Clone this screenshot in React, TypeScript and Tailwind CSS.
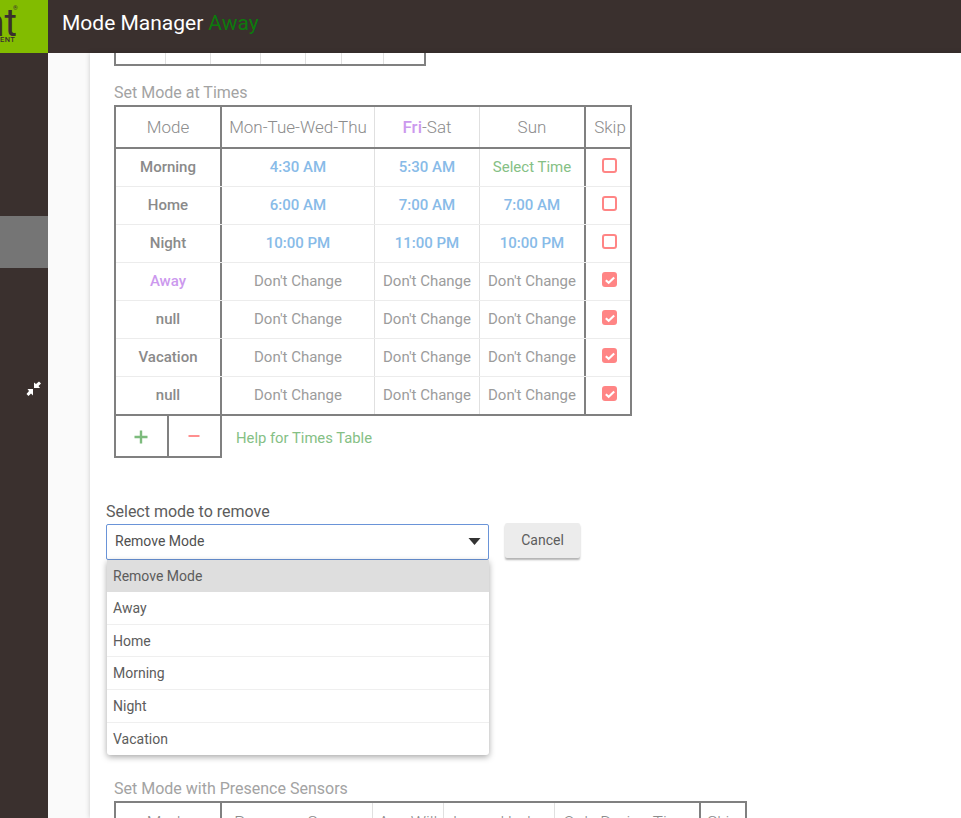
const T1 = "Don't Change";

function Check({ on }: { on: boolean }) {
  return on ? (
    <span className="flex h-[15px] w-[15px] items-center justify-center rounded-[3px] bg-[#ff8585]">
      <svg viewBox="0 0 16 16" className="h-[14px] w-[14px]"><path d="M3.2 8.2 6.5 11.2 12.8 5.2" fill="none" stroke="#fff" strokeWidth="2.4" /></svg>
    </span>
  ) : (
    <span className="h-[15px] w-[15px] rounded-[3px] border-2 border-[#ff8585]" />
  );
}

const rows = [
  { m: "Morning", a: "4:30 AM", b: "5:30 AM", c: "Select Time", skip: false },
  { m: "Home", a: "6:00 AM", b: "7:00 AM", c: "7:00 AM", skip: false },
  { m: "Night", a: "10:00 PM", b: "11:00 PM", c: "10:00 PM", skip: false },
  { m: "Away", a: T1, b: T1, c: T1, skip: true },
  { m: "null", a: T1, b: T1, c: T1, skip: true },
  { m: "Vacation", a: T1, b: T1, c: T1, skip: true },
  { m: "null", a: T1, b: T1, c: T1, skip: true },
];

function cellColor(v: string) {
  if (v === T1) return "text-[#9c9c9c]";
  if (v === "Select Time") return "text-[#85c085]";
  return "text-[#88bbe8] font-medium";
}

const options = ["Away", "Home", "Morning", "Night", "Vacation"];

export default function App() {
  return (
    <div className="flex h-[818px] w-[961px] flex-col overflow-hidden bg-[#fafafa] font-['Roboto',sans-serif]">
      <header className="flex h-[53px] shrink-0 bg-[#3a302e]">
        <div className="relative h-full w-[48px] overflow-hidden bg-[#82bc00] text-[#3a302e]">
          <span className="absolute right-[31px] top-[1px] whitespace-nowrap text-[38px] leading-[44px]">nt</span>
          <span className="absolute left-[13px] top-[4px] text-[6px] leading-[7px]">®</span>
          <span className="absolute left-[0px] top-[35px] whitespace-nowrap text-[7.5px] leading-[9px] font-medium tracking-[0.4px]">ENT</span>
        </div>
        <div className="flex items-center pb-[5px] pl-[14px] text-[21px] text-white">
          Mode Manager<span className="ml-[5px] text-[#0d7a0d]">Away</span>
        </div>
      </header>
      <div className="flex min-h-0 flex-1">
        <aside className="flex w-[48px] shrink-0 flex-col bg-[#3a302e]">
          <div className="mt-[163px] h-[52px] bg-[#757575]" />
          <div className="mt-[113px] flex justify-end pr-[6px]">
            <svg viewBox="0 0 16 16" className="h-[16px] w-[16px]" fill="#fff">
              <path d="M8 7V1.5L10 3l3-2.5 2 2-2.5 2.5L14 7Z" />
              <path d="M7 8H1.5L3 10 .5 13l2 2L5 12.5 7 14.5Z" />
            </svg>
          </div>
        </aside>
        <main className="ml-[42px] min-w-0 flex-1 bg-white pl-[24px] shadow-[0_0_5px_rgba(0,0,0,0.2)]">
          <div className="flex h-[13px] w-[312px] border-x-2 border-b-2 border-[#808080]">
            {[50, 45, 50, 45, 36, 42].map((w, i) => (
              <div key={i} style={{ width: w }} className="border-r border-[#e0e0e0]" />
            ))}
          </div>
          <h3 className="mt-[17px] text-[16px] leading-[20px] text-[#a3a3a3]">Set Mode at Times</h3>
          <div className="mt-[2px] w-[518px]">
            <div className="border-2 border-[#808080]">
              <div className="flex h-[42px] border-b-2 border-[#808080] text-[17px] font-light text-[#8c8c8c]">
                <div className="flex w-[106px] items-center justify-center border-r-2 border-[#808080] pt-[1px]">Mode</div>
                <div className="flex w-[153px] items-center justify-center whitespace-nowrap border-r border-[#e0e0e0] pt-[1px]">Mon-Tue-Wed-Thu</div>
                <div className="flex w-[105px] items-center justify-center border-r border-[#e0e0e0] pt-[1px]"><span className="font-medium text-[#cc99ee]">Fri</span>-Sat</div>
                <div className="flex w-[106px] items-center justify-center border-r-2 border-[#808080] pt-[1px]">Sun</div>
                <div className="flex w-[44px] items-center justify-center pl-[4px] pt-[1px]">Skip</div>
              </div>
              {rows.map((r, i) => (
                <div key={i} className={`flex text-[15px] ${i < rows.length - 1 ? "h-[38px] border-b border-[#ececec]" : "h-[37px]"}`}>
                  <div className={`flex w-[106px] items-center justify-center border-r-2 border-[#808080] font-medium ${r.m === "Away" ? "text-[#cc99ee]" : "text-[#8a8a8a]"}`}>{r.m}</div>
                  <div className={`flex w-[153px] items-center justify-center whitespace-nowrap border-r border-[#e0e0e0] ${cellColor(r.a)}`}>{r.a}</div>
                  <div className={`flex w-[105px] items-center justify-center whitespace-nowrap border-r border-[#e0e0e0] ${cellColor(r.b)}`}>{r.b}</div>
                  <div className={`flex w-[106px] items-center justify-center whitespace-nowrap border-r-2 border-[#808080] ${cellColor(r.c)}`}>{r.c}</div>
                  <div className="flex w-[44px] items-center justify-center pb-[4px] pl-[3px]"><Check on={r.skip} /></div>
                </div>
              ))}
            </div>
            <div className="flex h-[42px]">
              <div className="flex w-[108px] border-x-2 border-b-2 border-[#808080]">
                <div className="flex w-[53px] items-center justify-center border-r-2 border-[#808080] pr-[1px] pt-[1px]">
                  <svg viewBox="0 0 14 14" className="h-[14px] w-[14px]"><path d="M7 0.5v13M0.5 7h13" stroke="#7dbb7d" strokeWidth="2.4" /></svg>
                </div>
                <div className="flex flex-1 items-center justify-center pr-[1px] pt-[1px]">
                  <svg viewBox="0 0 14 14" className="h-[14px] w-[14px]"><path d="M1.5 6h11" stroke="#ff8f8f" strokeWidth="2" /></svg>
                </div>
              </div>
              <div className="flex items-center pl-[14px] pt-[2px] text-[14.8px] text-[#85c085]">Help for Times Table</div>
            </div>
          </div>
          <div className="relative ml-[-8px] mt-[44px] h-[277px]">
            <div className="text-[16px] leading-[20px] text-[#5c5c5c]">Select mode to remove</div>
            <div className="mt-[2px] flex items-start">
              <div className="flex h-[36px] w-[383px] items-center justify-between rounded-[2px] border border-[#6a94d8] pb-[1px] pl-[8px] pr-[7px] text-[14px] text-[#505050]">
                Remove Mode
                <svg viewBox="0 0 12 7" className="h-[7px] w-[13px]"><path d="M0 0h12L6 7Z" fill="#333" /></svg>
              </div>
              <button className="ml-[16px] mt-[-1px] h-[35px] w-[75px] rounded-[2px] bg-[#ececec] text-[14px] text-[#5c5c5c] shadow-[0_2px_2px_rgba(0,0,0,0.3)]">Cancel</button>
            </div>
            <div className="absolute left-[1px] top-[58px] w-[382px] overflow-hidden rounded-b-[3px] bg-white text-[14px] text-[#5c5c5c] shadow-[0_2px_6px_rgba(0,0,0,0.35)]">
              <div className="flex h-[32px] items-center bg-[#dedede] pl-[6px]">Remove Mode</div>
              {options.map((o, i) => (
                <div key={o} className={`flex h-[32.7px] items-center pl-[6px] ${i < options.length - 1 ? "border-b border-[#efefef] pt-[1px]" : ""}`}>{o}</div>
              ))}
            </div>
          </div>
          <h3 className="text-[16px] leading-[20px] text-[#a3a3a3]">Set Mode with Presence Sensors</h3>
          <div className="mt-[2px] flex h-[42px] w-[633px] border-2 border-[#808080] pb-0 text-[17px] font-light text-[#8c8c8c]">
            <div className="flex w-[106px] items-center justify-center border-r-2 border-[#808080] pt-[1px]">Mode</div>
            <div className="flex w-[151px] items-center justify-center whitespace-nowrap border-r border-[#e0e0e0] pt-[1px]">Presence Sensor</div>
            <div className="flex w-[71px] items-center justify-center whitespace-nowrap border-r border-[#e0e0e0] pt-[1px]">Any Will</div>
            <div className="flex w-[111px] items-center justify-center whitespace-nowrap border-r border-[#e0e0e0] pt-[1px]">Leave Under</div>
            <div className="flex w-[146px] items-center justify-center whitespace-nowrap border-r-2 border-[#808080] pt-[1px]">Only During Time</div>
            <div className="flex flex-1 items-center justify-center pt-[1px]">Skip</div>
          </div>
        </main>
      </div>
    </div>
  );
}
